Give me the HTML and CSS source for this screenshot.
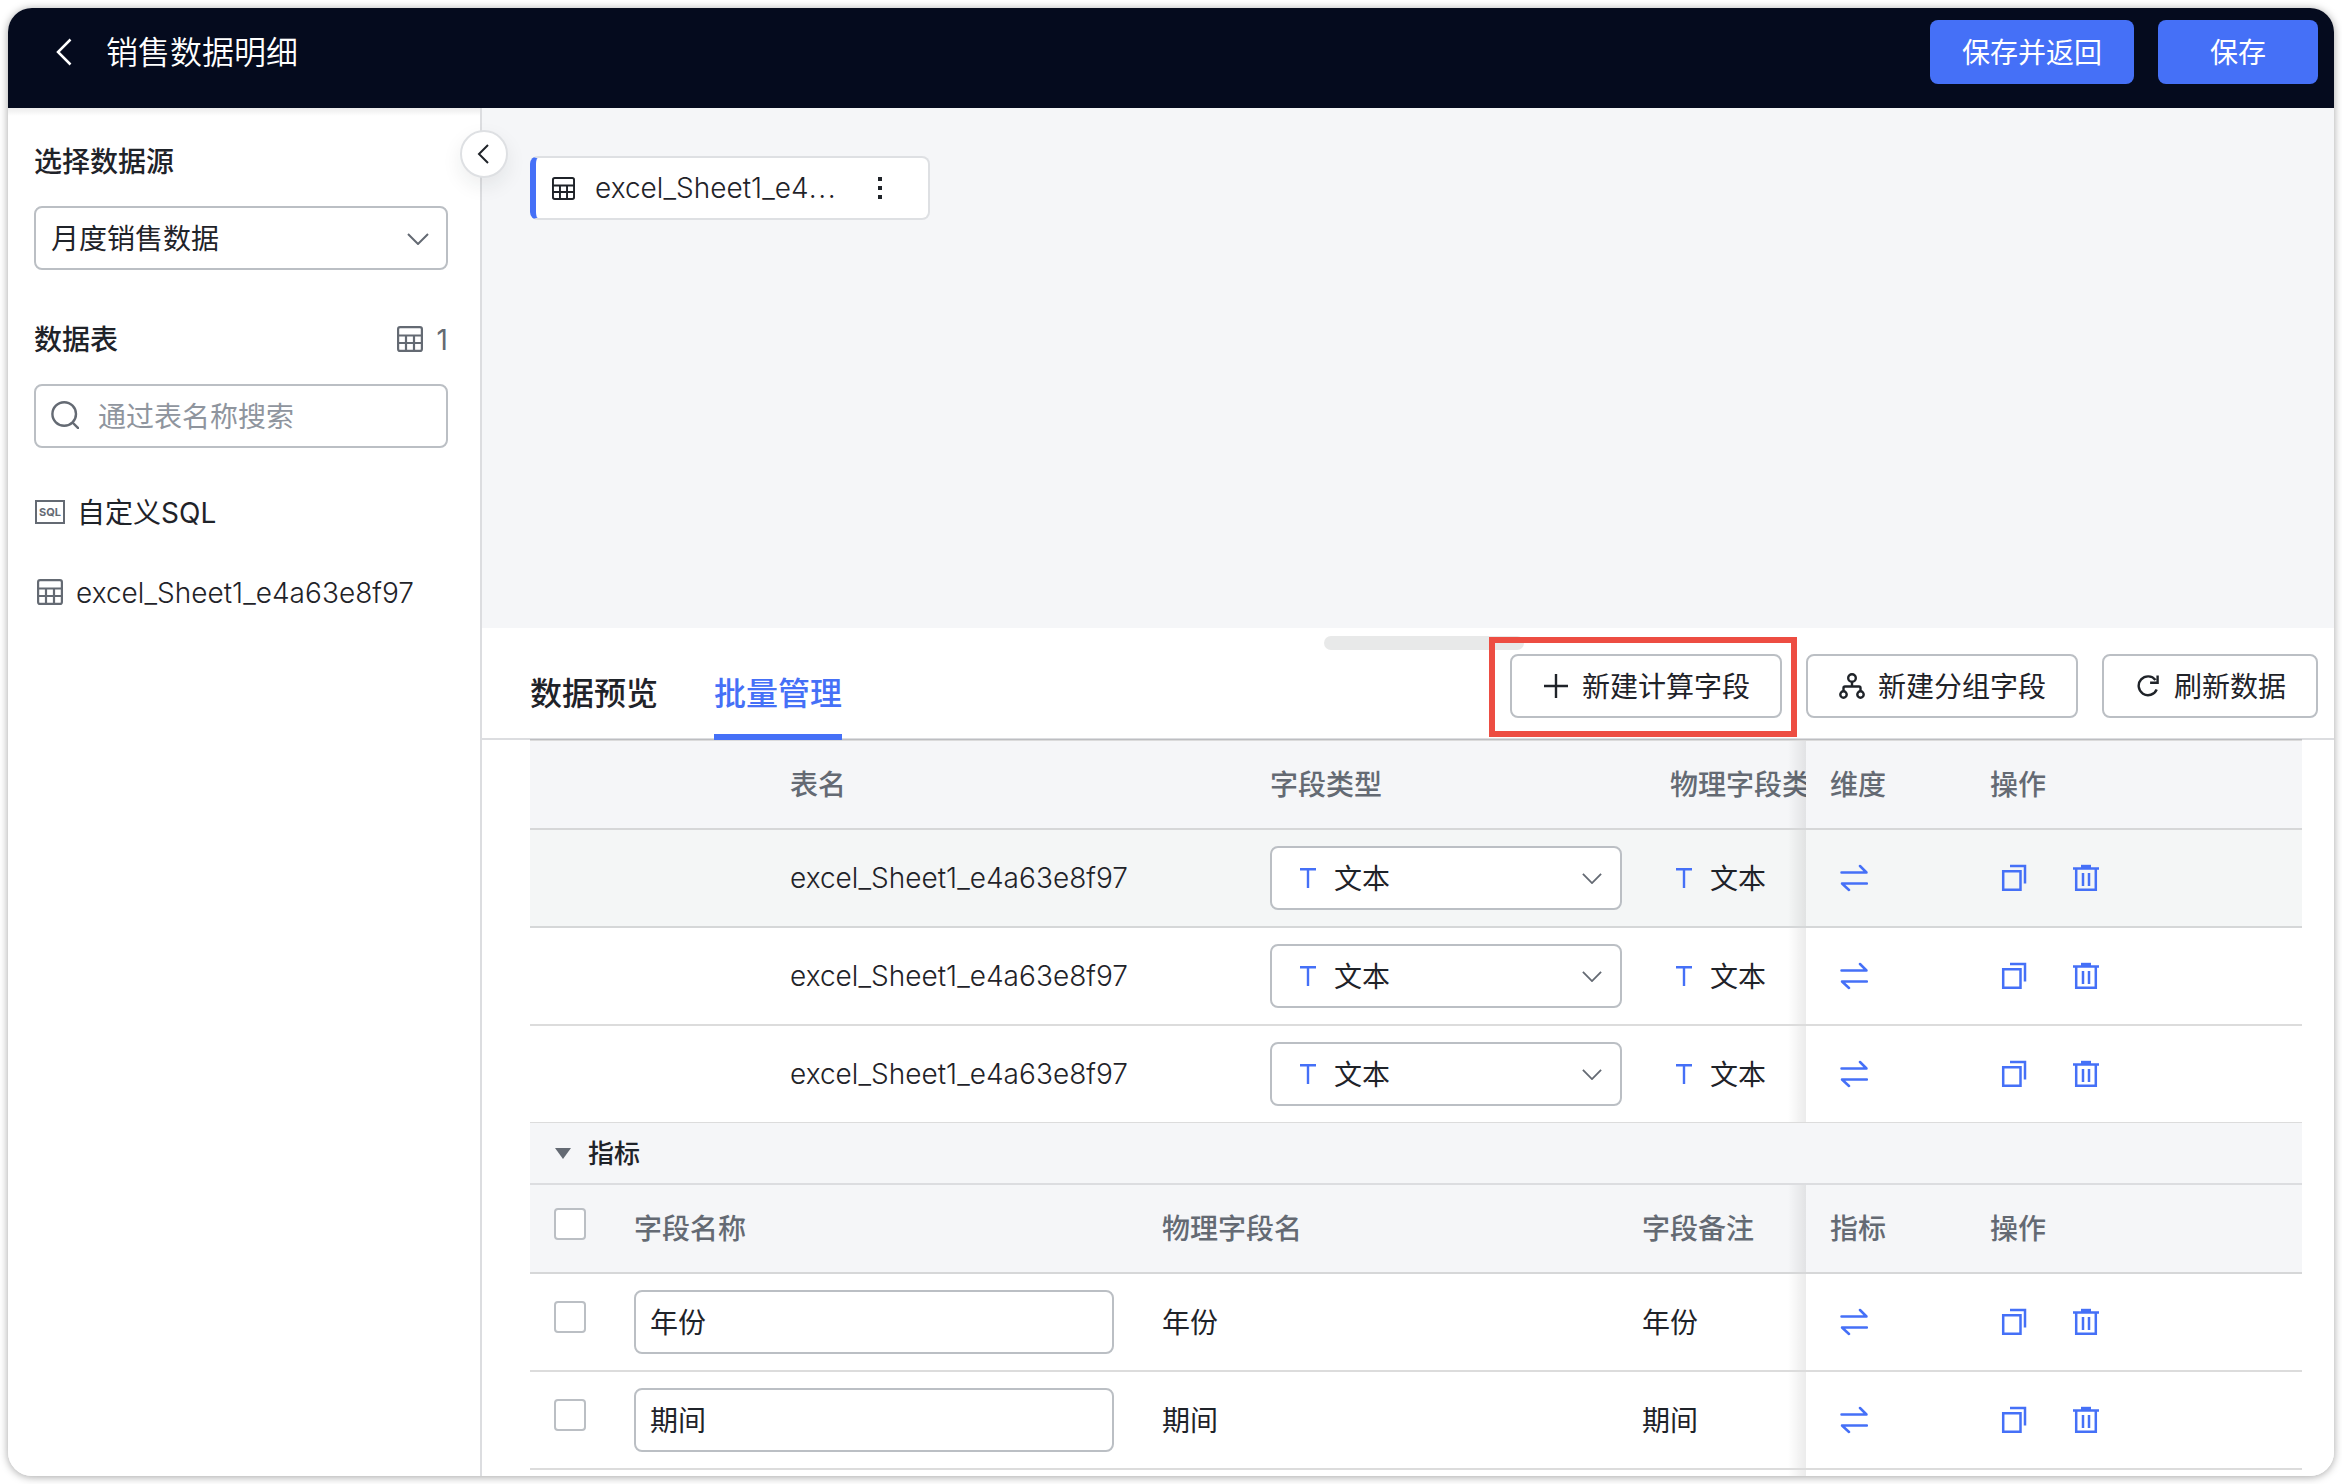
FILE: index.html
```html
<!DOCTYPE html>
<html lang="zh-CN">
<head>
<meta charset="utf-8">
<title>销售数据明细</title>
<link rel="stylesheet" href="styles.css">
</head>
<body>
<svg width="0" height="0" class="sprite" aria-hidden="true">
  <symbol id="i-table" viewBox="0 0 26 26"><g fill="none" stroke="currentColor" stroke-width="2.200"><rect x="1.100" y="1.100" width="23.800" height="23.800" rx="2"/><path d="M1 9.500h24M1 17h24M9 9v16M17 9v16"/></g></symbol>
  <symbol id="i-down" viewBox="0 0 22 12"><path d="M1 1l10 10L21 1" fill="none" stroke="currentColor" stroke-width="2"/></symbol>
  <symbol id="i-t" viewBox="0 0 18 20"><path d="M1 1.200h16M9 1v19" fill="none" stroke="currentColor" stroke-width="2.400"/></symbol>
  <symbol id="i-swap" viewBox="0 0 28 28"><path d="M1.500 8.500h25L20 2M27 19.500H2l7 6.500" fill="none" stroke="currentColor" stroke-width="2.500" stroke-linejoin="round" stroke-linecap="round"/></symbol>
  <symbol id="i-copy" viewBox="0 0 26 28"><path d="M2.200 7.200h17.300v18.600H2.200zM9 2h15v17.500" fill="none" stroke="currentColor" stroke-width="2.500"/></symbol>
  <symbol id="i-trash" viewBox="0 0 28 28"><path d="M1 4.500h26M4.200 4.500v21.300h19.600V4.500M11 9v13M17 9v13" fill="none" stroke="currentColor" stroke-width="2.500"/><path d="M9 .800h10v4H9z" fill="currentColor"/></symbol>
</svg>
<div class="window">
  <header class="topbar">
    <svg class="back" width="16" height="28" viewBox="0 0 16 28"><path d="M14.500 1.500L2 14l12.500 12.500" fill="none" stroke="#fff" stroke-width="2.500"/></svg>
    <h1>销售数据明细</h1>
    <button class="primary wide">保存并返回</button>
    <button class="primary">保存</button>
  </header>
  <div class="body">
    <aside class="sidebar">
      <h2>选择数据源</h2>
      <div class="field source"><span>月度销售数据</span><svg width="22" height="12"><use href="#i-down"/></svg></div>
      <div class="heading"><h2>数据表</h2><svg width="26" height="26"><use href="#i-table"/></svg><span>1</span></div>
      <div class="field search"><svg width="28" height="28" viewBox="0 0 28 28"><g fill="none" stroke="currentColor" stroke-width="2.400"><circle cx="13.200" cy="13" r="11.800"/><path d="M21 21l7 7"/></g></svg><span>通过表名称搜索</span></div>
      <div class="item"><svg width="30" height="24" viewBox="0 0 30 24"><rect x="1" y="1" width="28" height="22" fill="none" stroke="currentColor" stroke-width="2"/><text x="15" y="16" text-anchor="middle" class="sqlmark" textLength="22">SQL</text></svg><span>自定义SQL</span></div>
      <div class="item file"><svg width="26" height="26"><use href="#i-table"/></svg><span class="latin">excel_Sheet1_e4a63e8f97</span></div>
      <button class="collapse"><svg width="12" height="20" viewBox="0 0 12 20"><path d="M11 1L2 10l9 9" fill="none" stroke="#1f2329" stroke-width="2"/></svg></button>
    </aside>
    <main class="content">
      <section class="canvas">
        <div class="node"><svg width="23" height="23"><use href="#i-table"/></svg><span class="latin">excel_Sheet1_e4<span class="dots">...</span></span><svg width="4" height="24" viewBox="0 0 4 24"><path d="M0 1h4v4H0zM0 10h4v4H0zM0 19h4v4H0z" fill="#1f2329"/></svg></div>
      </section>
      <section class="panel">
        <div class="handle"></div>
        <div class="toolbar">
          <nav class="tabs"><a>数据预览</a><a class="active">批量管理</a></nav>
          <button class="tool marked"><svg width="24" height="24" viewBox="0 0 24 24"><path d="M0 12h24M12 0v24" fill="none" stroke="currentColor" stroke-width="2.400"/></svg><span>新建计算字段</span></button>
          <button class="tool"><svg width="26" height="26" viewBox="0 0 26 26"><g fill="none" stroke="currentColor" stroke-width="2.400"><circle cx="13" cy="5" r="3.800"/><circle cx="4.500" cy="21.500" r="3.200"/><circle cx="21.500" cy="21.500" r="3.200"/><path d="M13 9v4.500M4.500 18v-3q0-1.500 1.500-1.500h14q1.500 0 1.500 1.500v3"/></g></svg><span>新建分组字段</span></button>
          <button class="tool refresh"><svg width="22" height="24" viewBox="0 0 22 24"><path d="M19.700 15.500A9.400 9.400 0 1 1 18.500 6M20.600 1.500v7.300h-7.500" fill="none" stroke="currentColor" stroke-width="2.400"/></svg><span>刷新数据</span></button>
        </div>
        <div class="grid dimensions">
          <div class="row head">
            <div class="cells"><div></div><div>表名</div><div>字段类型</div><div>物理字段类</div></div>
            <div class="fixed"><div>维度</div><div>操作</div></div>
          </div>
          <div class="row hover">
            <div class="cells"><div></div><div class="latin">excel_Sheet1_e4a63e8f97</div><div><div class="field type"><svg width="18" height="20"><use href="#i-t"/></svg><span>文本</span><svg width="20" height="11"><use href="#i-down"/></svg></div></div><div class="kind"><svg width="18" height="20"><use href="#i-t"/></svg><span>文本</span></div></div>
            <div class="fixed"><div><svg width="28" height="28"><use href="#i-swap"/></svg></div><div><svg width="26" height="28"><use href="#i-copy"/></svg><svg width="28" height="28"><use href="#i-trash"/></svg></div></div>
          </div>
          <div class="row">
            <div class="cells"><div></div><div class="latin">excel_Sheet1_e4a63e8f97</div><div><div class="field type"><svg width="18" height="20"><use href="#i-t"/></svg><span>文本</span><svg width="20" height="11"><use href="#i-down"/></svg></div></div><div class="kind"><svg width="18" height="20"><use href="#i-t"/></svg><span>文本</span></div></div>
            <div class="fixed"><div><svg width="28" height="28"><use href="#i-swap"/></svg></div><div><svg width="26" height="28"><use href="#i-copy"/></svg><svg width="28" height="28"><use href="#i-trash"/></svg></div></div>
          </div>
          <div class="row last">
            <div class="cells"><div></div><div class="latin">excel_Sheet1_e4a63e8f97</div><div><div class="field type"><svg width="18" height="20"><use href="#i-t"/></svg><span>文本</span><svg width="20" height="11"><use href="#i-down"/></svg></div></div><div class="kind"><svg width="18" height="20"><use href="#i-t"/></svg><span>文本</span></div></div>
            <div class="fixed"><div><svg width="28" height="28"><use href="#i-swap"/></svg></div><div><svg width="26" height="28"><use href="#i-copy"/></svg><svg width="28" height="28"><use href="#i-trash"/></svg></div></div>
          </div>
        </div>
        <div class="group"><svg width="16" height="11" viewBox="0 0 16 11"><path d="M0 0h16L8 11z" fill="currentColor"/></svg><span>指标</span></div>
        <div class="grid measures">
          <div class="row head">
            <div class="cells"><div><i class="check"></i></div><div>字段名称</div><div>物理字段名</div><div>字段备注</div></div>
            <div class="fixed"><div>指标</div><div>操作</div></div>
          </div>
          <div class="row">
            <div class="cells"><div><i class="check"></i></div><div><div class="field name"><span>年份</span></div></div><div class="text">年份</div><div class="text">年份</div></div>
            <div class="fixed"><div><svg width="28" height="28"><use href="#i-swap"/></svg></div><div><svg width="26" height="28"><use href="#i-copy"/></svg><svg width="28" height="28"><use href="#i-trash"/></svg></div></div>
          </div>
          <div class="row">
            <div class="cells"><div><i class="check"></i></div><div><div class="field name"><span>期间</span></div></div><div class="text">期间</div><div class="text">期间</div></div>
            <div class="fixed"><div><svg width="28" height="28"><use href="#i-swap"/></svg></div><div><svg width="26" height="28"><use href="#i-copy"/></svg><svg width="28" height="28"><use href="#i-trash"/></svg></div></div>
          </div>
          <div class="row tail"><div class="cells"></div><div class="fixed"></div></div>
        </div>
      </section>
    </main>
  </div>
</div>
</body>
</html>
```
FILE: styles.css
```css
* { box-sizing: border-box; }
body {
  margin: 0;
  width: 2342px;
  height: 1484px;
  padding: 8px;
  background: #fff;
  color: #1f2329;
  font: 28px/40px Inter, "Noto Sans CJK SC", sans-serif;
  overflow: hidden;
}
.sprite { position: absolute; }
svg { display: block; flex: none; }
h1, h2 { margin: 0; }
button { font: inherit; color: inherit; padding: 0; border: 0; }
.latin { white-space: nowrap; font-weight: 350; letter-spacing: 0.03px; }
.dots { letter-spacing: 1.6px; }

.window {
  display: flex;
  flex-direction: column;
  width: 2326px;
  height: 1468px;
  border-radius: 24px;
  overflow: hidden;
  box-shadow: 0 1px 8px rgba(0, 0, 0, 0.36);
}
.topbar {
  display: flex;
  align-items: flex-start;
  height: 100px;
  padding: 12px 16px 0 48px;
  background: #050b1e;
  color: #fff;
}
.back { margin: 18px 34px 0 0; }
.topbar h1 { flex: 1; font-size: 32px; font-weight: 350; line-height: 65px; }
.primary {
  width: 160px;
  height: 64px;
  padding-top: 2px;
  border-radius: 8px;
  background: #4570f7;
  color: #fff;
}
.primary.wide { width: 204px; margin-right: 24px; }

.body { flex: 1; display: flex; min-height: 0; }
.sidebar {
  position: relative;
  width: 474px;
  padding: 34px 32px 0 26px;
  border-right: 2px solid #dcdde0;
  background: linear-gradient(#ececec, #fff 8px);
}
.sidebar h2 { font-size: 28px; font-weight: 500; line-height: 40px; }
.field {
  display: flex;
  align-items: center;
  height: 64px;
  border: 2px solid #bbbfc4;
  border-radius: 8px;
  background: #fff;
}
.field span, .tool span, .kind span { padding-top: 2px; }
.source { margin-top: 24px; padding: 0 17px 0 15px; justify-content: space-between; color: #1f2329; }
.source svg { color: #646a73; margin-top: 2px; }
.heading { display: flex; align-items: center; margin-top: 50px; color: #646a73; }
.heading h2 { flex: 1; color: #1f2329; }
.heading svg { margin-top: -2px; }
.heading span { margin-left: 14px; }
.search { margin-top: 24px; padding-left: 15px; color: #646a73; }
.search svg { margin-top: -2px; }
.search span { margin-left: 19px; color: #8f959e; }
.item { display: flex; align-items: center; gap: 12px; height: 40px; margin-top: 44px; padding-left: 1px; }
.item svg { color: #646a73; }
.item span { padding-top: 1px; }
.item.file { gap: 13px; margin-top: 40px; padding-left: 3px; }
.sqlmark { font: 700 11px Inter, sans-serif; fill: #646a73; }
.collapse {
  position: absolute;
  z-index: 3;
  right: -28px;
  top: 22px;
  display: flex;
  align-items: center;
  justify-content: center;
  width: 48px;
  height: 48px;
  padding-right: 3px;
  border: 2px solid #dee0e3;
  border-radius: 50%;
  background: #fff;
  box-shadow: 0 8px 20px rgba(31, 35, 41, 0.08);
}

.content { flex: 1; display: flex; flex-direction: column; min-width: 0; }
.canvas { height: 520px; padding: 48px; background: #f5f6f8; }
.node {
  display: flex;
  align-items: center;
  width: 400px;
  height: 64px;
  padding-left: 16px;
  border: 2px solid #dee0e3;
  border-left: 6px solid #4570f7;
  border-radius: 8px;
  background: #fff;
}
.node > span { width: 245px; margin: 0 38px 0 20px; }

.panel { position: relative; flex: 1; display: flex; flex-direction: column; min-height: 0; background: #fff; }
.handle {
  position: absolute;
  left: 842px;
  top: 8px;
  width: 200px;
  height: 14px;
  border-radius: 7px;
  background: #e8e9e9;
}
.toolbar {
  display: flex;
  height: 112px;
  padding: 26px 16px 0 48px;
  border-bottom: 2px solid #dcdde0;
}
.tabs { flex: 1; display: flex; gap: 56px; }
.tabs a { height: 86px; padding-top: 20px; font-size: 32px; font-weight: 500; }
.tabs .active { position: relative; z-index: 2; color: #4570f7; border-bottom: 6px solid #4570f7; }
.tool {
  position: relative;
  display: flex;
  align-items: center;
  gap: 14px;
  width: 272px;
  height: 64px;
  margin-left: 24px;
  padding-left: 32px;
  border: 2px solid #bbbfc4;
  border-radius: 8px;
  background: #fff;
}
.tool + .tool { gap: 13px; padding-left: 31px; }
.tool.refresh { gap: 15px; width: 216px; padding-left: 33px; }
.marked::after {
  content: "";
  position: absolute;
  inset: -19px -17px -21px -23px;
  border: 6px solid #ed4d42;
}

.grid { width: 1772px; margin-left: 48px; }
.dimensions { margin-top: -1px; border-top: 2px solid rgba(31, 31, 31, 0.16); }
.row { display: flex; height: 98px; border-bottom: 2px solid #dcdcdc; }
.cells { position: relative; flex: 1; display: grid; align-items: center; overflow: hidden; }
.cells > div { padding-left: 16px; white-space: nowrap; }
.cells > .text { padding-top: 2px; }
.cells::after {
  content: "";
  position: absolute;
  top: 0;
  right: 0;
  width: 18px;
  height: 100%;
  background: linear-gradient(to right, transparent, rgba(0, 0, 0, 0.08));
}
.dimensions .cells { grid-template-columns: 244px 480px 400px 1fr; }
.measures .cells { grid-template-columns: 88px 528px 480px 1fr; }
.fixed { width: 496px; display: grid; grid-template-columns: 160px 1fr; align-items: center; }
.fixed > div { display: flex; padding-left: 24px; color: #4570f7; }
.fixed > div:first-child svg { margin-left: 10px; }
.fixed > div:last-child svg { margin-left: 11px; }
.fixed > div:last-child svg + svg { margin-left: 45px; }
.head { height: 89px; background: #f5f6f8; color: #646a73; font-weight: 500; border-color: #d6d7d8; }
.head .fixed > div { color: #646a73; }
.hover { background: #f4f6f6; border-color: #d5d7d8; }
.last { height: 97px; border-bottom-width: 1px; }
.tail { height: 6px; border: 0; }
.type { width: 352px; padding: 0 18px 0 27px; }
.type span { flex: 1; margin-left: 17px; }
.type svg:first-child, .kind svg { color: #4570f7; }
.type svg:last-child { color: #646a73; }
.kind { display: flex; align-items: center; gap: 17px; }
.cells > .kind { padding-left: 21px; }
.name { width: 480px; padding-left: 14px; }
.check { display: block; width: 32px; height: 32px; margin: -10px 0 0 8px; border: 2px solid #bbbfc4; border-radius: 4px; background: #fff; }
.head .check { margin-top: -9px; }
.group {
  display: flex;
  align-items: center;
  gap: 17px;
  width: 1772px;
  height: 62px;
  margin-left: 48px;
  padding: 1px 0 0 25px;
  border-bottom: 2px solid #dcdde0;
  background: #f5f6f8;
  font-size: 26px;
  font-weight: 500;
}
.group svg { color: #646a73; }
```
